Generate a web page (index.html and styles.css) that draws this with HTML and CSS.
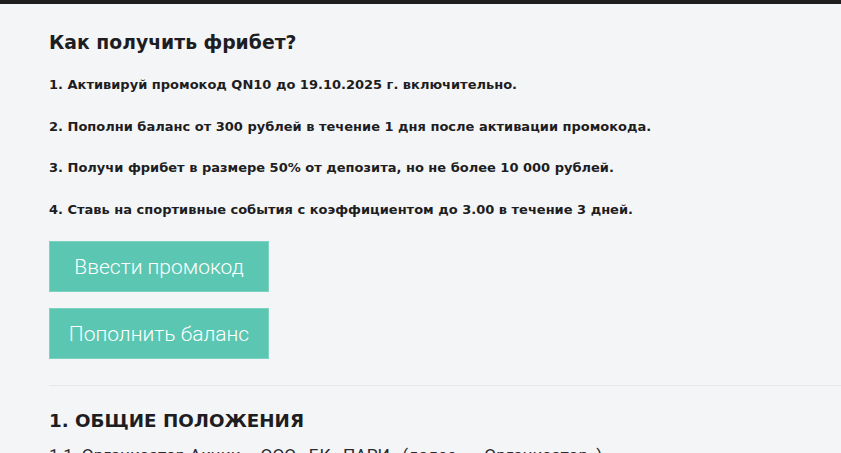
FILE: index.html
```html
<!DOCTYPE html>
<html lang="ru">
<head>
<meta charset="utf-8">
<link rel="stylesheet" href="styles.css">
</head>
<body>
<div class="topbar"></div>
<main class="content">
  <h2 class="title">Как получить фрибет?</h2>
  <ol class="steps">
    <li>1. Активируй промокод QN10 до 19.10.2025 г. включительно.</li>
    <li>2. Пополни баланс от 300 рублей в течение 1 дня после активации промокода.</li>
    <li>3. Получи фрибет в размере 50% от депозита, но не более 10 000 рублей.</li>
    <li>4. Ставь на спортивные события с коэффициентом до 3.00 в течение 3 дней.</li>
  </ol>
  <div class="buttons">
    <a class="btn">Ввести промокод</a>
    <a class="btn">Пополнить баланс</a>
  </div>
  <hr class="sep">
  <h2 class="section">1. ОБЩИЕ ПОЛОЖЕНИЯ</h2>
  <p class="text">1.1. Организатор Акции – ООО «БК «ПАРИ» (далее – «Организатор»).</p>
</main>
</body>
</html>
```
FILE: styles.css
```css
html, body {
  margin: 0;
  padding: 0;
  background: #f4f5f7;
  height: 100%;
  overflow: hidden;
}
body {
  font-family: "DejaVu Sans", sans-serif;
  color: #1d1d22;
}
.topbar {
  height: 4px;
  background: #1e1e1e;
}
.content {
  padding-left: 49px;
}
.title {
  margin: 0;
  padding-top: 27px;
  font-size: 18.8px;
  font-weight: 700;
  line-height: 24px;
}
.steps {
  list-style: none;
  margin: 21px 0 0 0;
  padding: 0;
  display: flex;
  flex-direction: column;
  gap: 24px;
}
.steps li {
  font-size: 13px;
  font-weight: 700;
  line-height: 17.5px;
}
.buttons {
  margin-top: 23px;
  display: flex;
  flex-direction: column;
  align-items: flex-start;
  gap: 16px;
}
.btn {
  box-sizing: border-box;
  width: 220px;
  height: 51px;
  display: flex;
  align-items: center;
  justify-content: center;
  background: #5bc6b2;
  border: 1px solid #7fd2c2;
  color: #ffffff;
  font-family: Roboto, sans-serif;
  font-weight: 300;
  font-size: 21px;
}
.sep {
  margin: 26px 0 0 0;
  border: 0;
  border-top: 1px solid #e6e7ea;
}
.section {
  margin: 0;
  padding-top: 23px;
  font-size: 18.3px;
  font-weight: 700;
  line-height: 24px;
}
.text {
  margin: 12px 0 0 0;
  font-family: Roboto, sans-serif;
  font-size: 17.3px;
  line-height: 20px;
  color: #2a2a30;
}
```
